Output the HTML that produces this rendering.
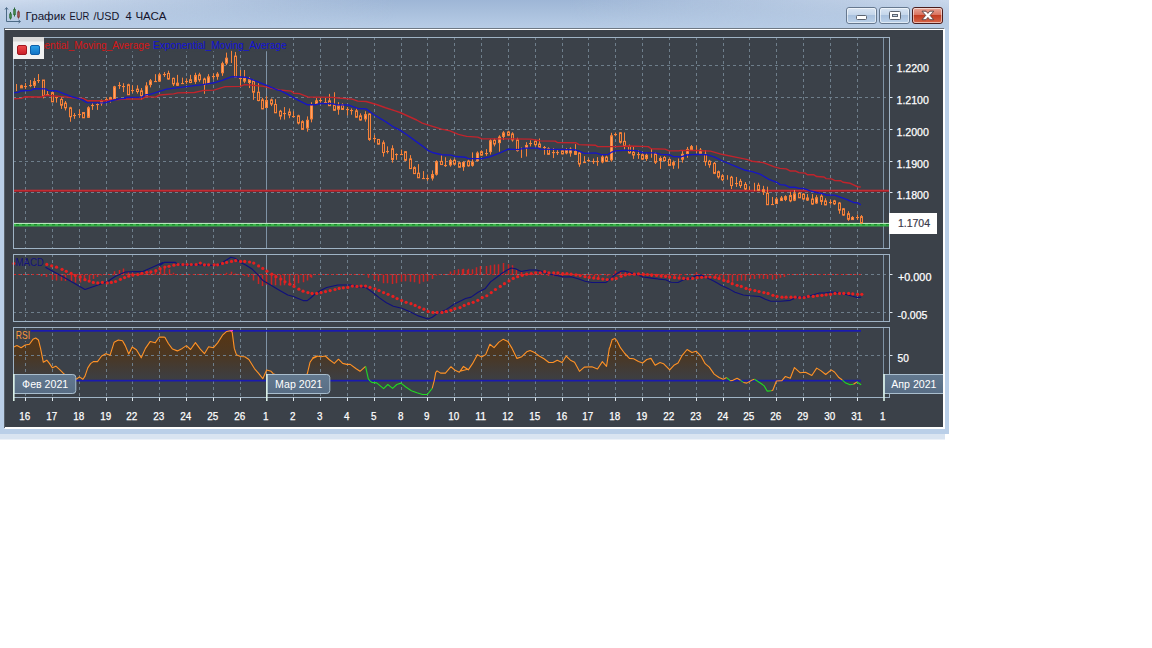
<!DOCTYPE html><html><head><meta charset="utf-8"><title>chart</title><style>
html,body{margin:0;padding:0;background:#fff;}body{width:1152px;height:648px;overflow:hidden;position:relative;font-family:"Liberation Sans",sans-serif;}
svg{position:absolute;left:0;top:0;display:block}text{font-family:"Liberation Sans",sans-serif;}
</style></head><body>
<svg width="1152" height="648" viewBox="0 0 1152 648">
<defs>
<linearGradient id="tb" x1="0" y1="0" x2="0" y2="1"><stop offset="0" stop-color="#9eb6d6"/><stop offset="1" stop-color="#b8cde6"/></linearGradient>
<linearGradient id="tbh" x1="0" y1="0" x2="1" y2="0"><stop offset="0" stop-color="#cfdcee" stop-opacity="1"/><stop offset="0.15" stop-color="#cfdcee" stop-opacity="0.6"/><stop offset="0.42" stop-color="#cfdcee" stop-opacity="0"/><stop offset="0.6" stop-color="#cfdcee" stop-opacity="0"/><stop offset="0.88" stop-color="#cfdcee" stop-opacity="0.6"/><stop offset="1" stop-color="#cfdcee" stop-opacity="0.9"/></linearGradient>
<linearGradient id="btn" x1="0" y1="0" x2="0" y2="1"><stop offset="0" stop-color="#dbe6f4"/><stop offset="0.48" stop-color="#c3d5ea"/><stop offset="0.5" stop-color="#a9c1de"/><stop offset="1" stop-color="#bdd2ea"/></linearGradient>
<linearGradient id="btnc" x1="0" y1="0" x2="0" y2="1"><stop offset="0" stop-color="#e9a99b"/><stop offset="0.48" stop-color="#d9705c"/><stop offset="0.5" stop-color="#c33d22"/><stop offset="1" stop-color="#d8674a"/></linearGradient>
<linearGradient id="rsifill" gradientUnits="userSpaceOnUse" x1="0" y1="331" x2="0" y2="381"><stop offset="0" stop-color="#5a3510" stop-opacity="0.97"/><stop offset="0.5" stop-color="#523414" stop-opacity="0.72"/><stop offset="1" stop-color="#483420" stop-opacity="0.12"/></linearGradient>
<linearGradient id="mlab" x1="0" y1="0" x2="0" y2="1"><stop offset="0" stop-color="#63798f"/><stop offset="1" stop-color="#586d85"/></linearGradient>
<linearGradient id="redsq" x1="0" y1="0" x2="0" y2="1"><stop offset="0" stop-color="#f04a4a"/><stop offset="1" stop-color="#c81e28"/></linearGradient>
<linearGradient id="bluesq" x1="0" y1="0" x2="0" y2="1"><stop offset="0" stop-color="#2aa0e8"/><stop offset="1" stop-color="#1272c4"/></linearGradient>
<clipPath id="cmain"><rect x="13" y="38" width="876" height="210"/></clipPath>
<clipPath id="cmacd"><rect x="14" y="255" width="875" height="66"/></clipPath>
<clipPath id="crsi"><rect x="14" y="328" width="875" height="69"/></clipPath>
<clipPath id="cdark"><rect x="5" y="30" width="938" height="397"/></clipPath>
<linearGradient id="tbm" x1="0" y1="0" x2="0" y2="1"><stop offset="0" stop-color="#fff"/><stop offset="1" stop-color="#000"/></linearGradient><mask id="tbmask"><rect x="0" y="0" width="949" height="29" fill="url(#tbm)"/></mask>
</defs>
<rect x="0" y="0" width="949" height="434" fill="#bacfe8"/>
<rect x="0" y="434" width="945" height="5.5" fill="#d9e4f1"/>
<rect x="0" y="0" width="949" height="29" fill="url(#tb)"/>
<rect x="0" y="0" width="949" height="29" fill="url(#tbh)" mask="url(#tbmask)"/>
<rect x="4" y="28" width="940" height="400" fill="#6e7883"/>
<rect x="4.5" y="29" width="940.5" height="400" fill="#fff"/>
<rect x="5" y="30" width="938" height="397" fill="#3b4149"/>
<rect x="4" y="28" width="1" height="400" fill="#59626c"/>
<g fill="none" stroke="#4c6a86" stroke-width="1"><path d="M6.5 8 V21.5 H20"/><path d="M5 9.5 L6.5 7.5 L8 9.5"/><path d="M18.5 20 L20.5 21.5 L18.5 23"/></g>
<g stroke="#2e6a3a" stroke-width="1"><path d="M10.5 12 V19.5 M14.5 7.5 V16.5"/><rect x="9.8" y="14" width="1.4" height="4" fill="#58a860"/><rect x="13.8" y="9.5" width="1.4" height="5" fill="#58a860"/></g>
<g stroke="#7a3a3a" stroke-width="1"><path d="M18.5 10.5 V18.5"/><rect x="17.8" y="12" width="1.4" height="5" fill="#c86a6a"/></g>
<g font-size="11.6" fill="#14142c" id="title"><text x="25.5" y="19.6" textLength="39.8" lengthAdjust="spacingAndGlyphs">График</text><text x="69.6" y="19.6" textLength="19.8" lengthAdjust="spacingAndGlyphs">EUR</text><text x="93.4" y="19.6" textLength="25.8" lengthAdjust="spacingAndGlyphs">/USD</text><text x="125.4" y="19.6" textLength="6.2" lengthAdjust="spacingAndGlyphs">4</text><text x="135.4" y="19.6" textLength="31" lengthAdjust="spacingAndGlyphs">ЧАСА</text></g>
<rect x="846.5" y="7.5" width="30" height="16" rx="2.5" fill="url(#btn)" stroke="#66788f" stroke-width="1"/>
<rect x="847.5" y="8.5" width="28" height="14" rx="1.5" fill="none" stroke="#fff" stroke-opacity="0.55" stroke-width="1"/>
<rect x="879.5" y="7.5" width="30" height="16" rx="2.5" fill="url(#btn)" stroke="#66788f" stroke-width="1"/>
<rect x="880.5" y="8.5" width="28" height="14" rx="1.5" fill="none" stroke="#fff" stroke-opacity="0.55" stroke-width="1"/>
<rect x="912.5" y="7.5" width="30" height="16" rx="2.5" fill="url(#btnc)" stroke="#4a1c1c" stroke-width="1"/>
<rect x="913.5" y="8.5" width="28" height="14" rx="1.5" fill="none" stroke="#fff" stroke-opacity="0.55" stroke-width="1"/>
<rect x="856.5" y="15.5" width="10" height="4" rx="1" fill="#fff" stroke="#5c6470" stroke-width="1"/>
<rect x="889.5" y="11.5" width="11" height="8" rx="1" fill="#fff" stroke="#5c6470" stroke-width="1"/><rect x="892.5" y="14.5" width="5" height="2" fill="#c0d0e4" stroke="#5c6470" stroke-width="1"/>
<path d="M922 11.2 L926 11.2 L927.9 13.4 L929.8 11.2 L933.8 11.2 L930.1 15.4 L933.8 19.7 L929.8 19.7 L927.9 17.4 L926 19.7 L922 19.7 L925.7 15.4 Z" fill="#fff" stroke="#5a4040" stroke-width="0.9" stroke-linejoin="round"/>
<g stroke="#6e7e8b" stroke-width="1" stroke-dasharray="3 3" fill="none">
<path d="M25.5 37 V248.5"/>
<path d="M52.5 37 V248.5"/>
<path d="M79.5 37 V248.5"/>
<path d="M106.5 37 V248.5"/>
<path d="M132.5 37 V248.5"/>
<path d="M159.5 37 V248.5"/>
<path d="M186.5 37 V248.5"/>
<path d="M213.5 37 V248.5"/>
<path d="M240.5 37 V248.5"/>
<path d="M293.5 37 V248.5"/>
<path d="M320.5 37 V248.5"/>
<path d="M347.5 37 V248.5"/>
<path d="M374.5 37 V248.5"/>
<path d="M401.5 37 V248.5"/>
<path d="M427.5 37 V248.5"/>
<path d="M454.5 37 V248.5"/>
<path d="M481.5 37 V248.5"/>
<path d="M508.5 37 V248.5"/>
<path d="M535.5 37 V248.5"/>
<path d="M562.5 37 V248.5"/>
<path d="M588.5 37 V248.5"/>
<path d="M615.5 37 V248.5"/>
<path d="M642.5 37 V248.5"/>
<path d="M669.5 37 V248.5"/>
<path d="M696.5 37 V248.5"/>
<path d="M723.5 37 V248.5"/>
<path d="M749.5 37 V248.5"/>
<path d="M776.5 37 V248.5"/>
<path d="M803.5 37 V248.5"/>
<path d="M830.5 37 V248.5"/>
<path d="M857.5 37 V248.5"/>
<path d="M13 65.5 H889"/>
<path d="M13 97.5 H889"/>
<path d="M13 129.5 H889"/>
<path d="M13 161.5 H889"/>
<path d="M13 192.5 H889"/>
</g>
<path d="M266.5 37.5 V248.5" stroke="#7f93a6" stroke-width="1"/>
<path d="M883.5 37.5 V248.5" stroke="#7f93a6" stroke-width="1"/>
<g stroke="#6e7e8b" stroke-width="1" stroke-dasharray="3 3" fill="none">
<path d="M25.5 254 V321.5"/>
<path d="M52.5 254 V321.5"/>
<path d="M79.5 254 V321.5"/>
<path d="M106.5 254 V321.5"/>
<path d="M132.5 254 V321.5"/>
<path d="M159.5 254 V321.5"/>
<path d="M186.5 254 V321.5"/>
<path d="M213.5 254 V321.5"/>
<path d="M240.5 254 V321.5"/>
<path d="M293.5 254 V321.5"/>
<path d="M320.5 254 V321.5"/>
<path d="M347.5 254 V321.5"/>
<path d="M374.5 254 V321.5"/>
<path d="M401.5 254 V321.5"/>
<path d="M427.5 254 V321.5"/>
<path d="M454.5 254 V321.5"/>
<path d="M481.5 254 V321.5"/>
<path d="M508.5 254 V321.5"/>
<path d="M535.5 254 V321.5"/>
<path d="M562.5 254 V321.5"/>
<path d="M588.5 254 V321.5"/>
<path d="M615.5 254 V321.5"/>
<path d="M642.5 254 V321.5"/>
<path d="M669.5 254 V321.5"/>
<path d="M696.5 254 V321.5"/>
<path d="M723.5 254 V321.5"/>
<path d="M749.5 254 V321.5"/>
<path d="M776.5 254 V321.5"/>
<path d="M803.5 254 V321.5"/>
<path d="M830.5 254 V321.5"/>
<path d="M857.5 254 V321.5"/>
<path d="M13 274.5 H889"/>
<path d="M13 312.5 H889"/>
</g>
<path d="M266.5 254.5 V321.5" stroke="#7f93a6" stroke-width="1"/>
<path d="M883.5 254.5 V321.5" stroke="#7f93a6" stroke-width="1"/>
<g clip-path="url(#crsi)">
<path d="M13.47 347 L16.94 345.61 L21.11 347.69 L25.28 344.92 L29.44 344.22 L32.92 339.36 L35.69 337.97 L38.47 340.06 L40.56 348.39 L43.33 362.28 L46.81 360.19 L49.58 363.67 L52.36 367.83 L55.83 366.17 L60 369.92 L64.17 374.08 L68.33 376.86 L72.5 378.25 L76.67 378.94 L79.44 376.86 L82.92 379.22 L85 376.17 L87.78 367.83 L90.56 363.67 L93.33 361.58 L97.5 361.58 L101.67 356.03 L105.83 353.67 L110 355.33 L114.17 342.14 L118.33 340.06 L122.5 340.75 L125.28 345.61 L128.75 353.94 L132.22 347 L136.39 349.78 L141.25 357.83 L145.42 348.39 L150.28 341.44 L155.14 342.83 L159.31 337 L164.17 337 L160 337.28 L164.86 337.28 L168.33 343.53 L172.5 349.08 L177.36 350.89 L182.22 348.39 L186.39 345.61 L190.56 349.5 L195.42 342.56 L200.28 349.08 L204.44 353.67 L208.61 346.72 L213.47 347.69 L217.64 342.83 L222.5 335.19 L226.67 331.44 L230.83 330.61 L232.22 332.42 L234.31 348.39 L236.39 354.64 L240.56 356.44 L244.72 356.72 L248.89 359.5 L254.44 368.53 L258.61 373.39 L262.78 378.67 L266.67 369.92 L271.11 371.31 L273.19 373.67 L278.06 375.47 L285 376.86 L293.33 377.56 L301.67 376.86 L307.22 374.08 L310 362.28 L312.78 358.39 L316.94 356.44 L312.78 357.83 L316.94 356.03 L321.11 356.72 L325.28 356.03 L329.44 359.78 L334.31 363.39 L338.47 359.22 L342.64 363.39 L346.81 364.36 L350.28 364.36 L355.83 368.53 L360 371.31 L365.56 366.44 L365.56 380.7 L13.47 380.7 Z" fill="url(#rsifill)" stroke="none"/>
<path d="M432.22 380.7 L434.31 380.33 L435.69 372.69 L437.08 370.89 L440.56 373.11 L445.42 373.11 L450.97 366.72 L455.14 370.33 L459.31 372.28 L463.47 366.44 L467.64 369.22 L460 371.31 L463.47 366.44 L468.33 369.92 L472.5 363.67 L477.36 354.64 L481.53 357 L485.69 354.64 L489.86 344.22 L494.03 347.69 L498.89 342.14 L503.06 339.36 L507.92 341.44 L512.08 348.39 L516.94 358.39 L521.81 356.72 L526.67 351.86 L530.14 350.47 L535 352.83 L539.17 356.03 L544.03 358.81 L548.89 362.56 L553.06 362.56 L557.22 360.19 L562.08 362.56 L566.25 356.03 L570.42 360.19 L574.58 362.28 L579.44 371.31 L584.31 367.14 L591.94 366.72 L597.5 368.94 L602.36 361.58 L606.53 366.44 L609.31 348.39 L610 347 L612.08 339.78 L614.86 338.39 L616.94 340.75 L620.42 347.69 L624.58 353.25 L629.44 358.39 L633.61 358.81 L638.47 361.58 L642.64 362.97 L646.81 359.5 L650.97 358.39 L655.14 365.33 L660 362.56 L663.47 363.67 L669.72 369.92 L673.89 365.33 L678.06 362.97 L682.22 355.33 L687.08 349.5 L691.94 352.56 L696.11 351.17 L700.97 356.03 L705.14 363.67 L709.31 367.14 L714.17 374.08 L719.03 377.56 L723.19 379.22 L726.67 377.56 L726.67 380.7 L432.22 380.7 Z" fill="url(#rsifill)" stroke="none"/>
<path d="M730.14 380.61 L732.92 380.33 L737.08 378.25 L740.56 380.33 L740.56 380.7 L730.14 380.7 Z" fill="url(#rsifill)" stroke="none"/>
<path d="M743.33 380.7 L746.81 380.7 L751.67 380.33 L754.44 379.22 L754.44 380.7 L743.33 380.7 Z" fill="url(#rsifill)" stroke="none"/>
<path d="M771.53 380.7 L772.92 380.7 L776.39 380.7 L781.94 380.61 L785.42 376.44 L790.28 378.25 L794.44 367.56 L800 372.69 L805.56 372.28 L811.81 375.47 L816.67 368.11 L820.83 370.61 L825.69 374.5 L831.25 369.92 L834.72 372.28 L838.89 377.56 L842.36 380.06 L842.36 380.7 L771.53 380.7 Z" fill="url(#rsifill)" stroke="none"/>
<path d="M853.47 380.7 L856.94 380.7 L856.94 380.7 L853.47 380.7 Z" fill="url(#rsifill)" stroke="none"/>
</g>
<g stroke="#6e7e8b" stroke-width="1" stroke-dasharray="3 3" fill="none">
<path d="M25.5 327 V397.5"/>
<path d="M52.5 327 V397.5"/>
<path d="M79.5 327 V397.5"/>
<path d="M106.5 327 V397.5"/>
<path d="M132.5 327 V397.5"/>
<path d="M159.5 327 V397.5"/>
<path d="M186.5 327 V397.5"/>
<path d="M213.5 327 V397.5"/>
<path d="M240.5 327 V397.5"/>
<path d="M293.5 327 V397.5"/>
<path d="M320.5 327 V397.5"/>
<path d="M347.5 327 V397.5"/>
<path d="M374.5 327 V397.5"/>
<path d="M401.5 327 V397.5"/>
<path d="M427.5 327 V397.5"/>
<path d="M454.5 327 V397.5"/>
<path d="M481.5 327 V397.5"/>
<path d="M508.5 327 V397.5"/>
<path d="M535.5 327 V397.5"/>
<path d="M562.5 327 V397.5"/>
<path d="M588.5 327 V397.5"/>
<path d="M615.5 327 V397.5"/>
<path d="M642.5 327 V397.5"/>
<path d="M669.5 327 V397.5"/>
<path d="M696.5 327 V397.5"/>
<path d="M723.5 327 V397.5"/>
<path d="M749.5 327 V397.5"/>
<path d="M776.5 327 V397.5"/>
<path d="M803.5 327 V397.5"/>
<path d="M830.5 327 V397.5"/>
<path d="M857.5 327 V397.5"/>
<path d="M13 355.5 H889"/>
</g>
<path d="M266.5 327.5 V397.5" stroke="#7f93a6" stroke-width="1"/>
<path d="M883.5 327.5 V397.5" stroke="#7f93a6" stroke-width="1"/>
<rect x="14" y="38" width="275" height="13.2" fill="#3b4149"/>
<g clip-path="url(#cmain)">
<rect x="14" y="189.7" width="876" height="1.4" fill="#c02c34"/><rect x="14" y="191" width="876" height="1" fill="#98222a"/>
<rect x="14" y="222.9" width="876" height="1.1" fill="#c6ecc8"/>
<rect x="14" y="223.9" width="876" height="2.6" fill="#3db54c"/>
<path d="M16 224.7 H890" stroke="#0f7a22" stroke-width="1.1" stroke-dasharray="3 3"/>
<path d="M12.5 84.22 V87.37 M16.5 84.01 V91.04 M21.5 84.75 V87.9 M25.5 82.97 V88.95 M30.5 80.03 V87.16 M34.5 77.93 V88.95 M38.5 74.05 V82.97 M43.5 80.03 V98.39 M47.5 91.04 V95.24 M52.5 92.09 V101.85 M56.5 97.02 V102.58 M61.5 97.34 V108.88 M65.5 101.01 V110.45 M70.5 106.78 V121.78 M74.5 113.07 V118.84 M79.5 109.4 V117.79 M83.5 112.02 V118 M88.5 106.25 V117.79 M92.5 103.11 V109.92 M97.5 103.11 V109.92 M101.5 99.44 V105.73 M106.5 97.34 V102.06 M110.5 96.81 V102.58 M114.5 85.8 V98.91 M119.5 82.13 V88.95 M123.5 83.18 V92.09 M128.5 83.7 V94.71 M132.5 85.28 V92.92 M137.5 85.28 V93.61 M141.5 88.06 V99.86 M146.5 82.22 V96.39 M150.5 79.03 V87.36 M155.5 74.17 V81.81 M159.5 72.78 V81.81 M164.5 72.08 V76.94 M168.5 70.69 V79.72 M173.5 77.64 V85.97 M177.5 74.86 V85.97 M182.5 77.64 V83.89 M186.5 78.33 V83.89 M190.5 74.86 V83.19 M195.5 72.78 V83.89 M199.5 72.78 V81.81 M204.5 77.64 V93.89 M208.5 74.17 V83.89 M213.5 73.47 V79.44 M217.5 72.08 V79.72 M222.5 61.67 V75.83 M226.5 52.64 V65.14 M231.5 50.83 V63.06 M235.5 51.94 V77.22 M240.5 70 V85.97 M244.5 70 V83.19 M249.5 76.94 V88.06 M253.5 79.72 V99.86 M258.5 83.19 V101.25 M262.5 97.78 V109.17 M266.5 96.11 V108.19 M271.5 98.47 V106.11 M275.5 99.17 V113.06 M280.5 109.86 V119.58 M284.5 107.08 V119.58 M289.5 108.47 V118.19 M293.5 111.25 V117.5 M298.5 114.72 V124.44 M302.5 120.28 V130 M307.5 116.39 V131.67 M311.5 102.22 V122.36 M316.5 98.06 V104.31 M320.5 98.06 V102.92 M325.5 97.36 V102.92 M329.5 93.89 V105.69 M334.5 92.22 V110.83 M338.5 102.22 V114.72 M342.5 103.33 V109.86 M347.5 107.08 V115.42 M351.5 108.47 V114.72 M356.5 108.47 V117.5 M360.5 113.33 V120.56 M365.5 111.25 V121.67 M369.5 113.33 V140.83 M374.5 134.86 V142.5 M378.5 139.03 V144.58 M383.5 140.42 V156.67 M387.5 146.39 V153.61 M392.5 145.28 V162.64 M396.5 153.33 V159.86 M401.5 149.58 V154.72 M405.5 151.39 V161.39 M410.5 155.14 V169.03 M414.5 166.25 V173.89 M418.5 164.17 V178.06 M423.5 171.11 V178.75 M427.5 174.58 V180.83 M432.5 170.42 V180.56 M436.5 160.28 V175.56 M441.5 155.14 V164.86 M445.5 157.22 V166.94 M450.5 158.61 V166.67 M454.5 158.61 V165.28 M459.5 161.67 V167.64 M463.5 161.11 V170.83 M468.5 159.72 V166.67 M472.5 152.36 V166.67 M477.5 151.39 V161.67 M481.5 150.28 V155.83 M486.5 149.17 V155.83 M490.5 139.17 V154.44 M494.5 138.47 V146.39 M499.5 135.28 V151.67 M503.5 131.11 V139.86 M508.5 130.83 V136.11 M512.5 132.22 V141.67 M517.5 137.78 V151.67 M521.5 147.5 V157.92 M526.5 142.22 V156.53 M530.5 140.28 V146.39 M535.5 140.28 V146.39 M539.5 138.47 V147.5 M544.5 145.97 V154.72 M548.5 147.36 V155 M553.5 148.06 V158.06 M557.5 150.14 V155 M562.5 149.17 V154.31 M566.5 148.06 V154.31 M570.5 147.36 V156.67 M575.5 144.17 V155 M579.5 151.53 V166.81 M584.5 156.11 V162.64 M588.5 158.47 V161.94 M593.5 158.47 V164.03 M597.5 157.08 V165.83 M602.5 155 V163.33 M606.5 155.69 V161.94 M611.5 132.78 V161.67 M615.5 132.5 V136.25 M620.5 132.08 V143.61 M624.5 132.5 V149.44 M629.5 144.58 V153.61 M633.5 146.67 V158.89 M638.5 150.14 V158.89 M642.5 152.92 V159.86 M646.5 153.61 V160.83 M651.5 148.75 V157.78 M655.5 152.22 V164.03 M660.5 156.39 V168.89 M664.5 156.11 V161.67 M669.5 158.47 V166.11 M673.5 160.56 V168.89 M678.5 158.47 V168.61 M682.5 150.83 V162.64 M687.5 146.94 V157.78 M691.5 145 V150.14 M696.5 145.56 V152.92 M700.5 148.06 V153.61 M705.5 150.14 V165.83 M709.5 159.86 V167.78 M714.5 161.94 V174.17 M718.5 170.56 V178.61 M722.5 174.17 V181.11 M727.5 175.14 V179.72 M731.5 175.83 V189.03 M736.5 176.94 V186.94 M740.5 178.89 V188.06 M745.5 182.08 V190 M749.5 186.25 V190 M754.5 182.78 V191.11 M758.5 182.78 V191.11 M763.5 185.83 V195 M767.5 186.67 V205 M772.5 196.94 V204.72 M776.5 196.94 V203.89 M781.5 195.97 V200.83 M785.5 195.28 V201.11 M790.5 191.81 V202.22 M794.5 190 V201.11 M799.5 192.22 V198.06 M803.5 193.57 V199.86 M807.5 194.09 V200.91 M812.5 194.09 V204.9 M816.5 195.14 V203.85 M821.5 194.09 V204.9 M825.5 198.29 V205.11 M830.5 199.86 V204.58 M834.5 199.86 V204.9 M839.5 201.96 V213.71 M843.5 208.04 V215.81 M848.5 211.19 V220.84 M852.5 216.12 V219.79 M857.5 214.55 V219.79 M861.5 215.07 V223.46" stroke="#f6823a" stroke-width="1" fill="none"/>
<g fill="#56423a" stroke="#f6823a" stroke-width="1"><rect x="42.5" y="80.03" width="2" height="15.73"/><rect x="51.5" y="92.62" width="2" height="9.23"/><rect x="60.5" y="99.44" width="2" height="5.77"/><rect x="64.5" y="103.11" width="2" height="4.72"/><rect x="69.5" y="107.83" width="2" height="8.92"/><rect x="82.5" y="112.55" width="2" height="5.24"/><rect x="127.5" y="84.75" width="2" height="9.97"/><rect x="136.5" y="89.17" width="2" height="2.36"/><rect x="140.5" y="90.83" width="2" height="4.86"/><rect x="167.5" y="73.47" width="2" height="5.56"/><rect x="172.5" y="78.33" width="2" height="5.56"/><rect x="189.5" y="79.72" width="2" height="2.78"/><rect x="198.5" y="74.86" width="2" height="4.86"/><rect x="203.5" y="79.03" width="2" height="5.56"/><rect x="234.5" y="56.11" width="2" height="20.83"/><rect x="252.5" y="80.83" width="2" height="11.39"/><rect x="257.5" y="92.22" width="2" height="8.33"/><rect x="261.5" y="99.86" width="2" height="9.03"/><rect x="270.5" y="99.86" width="2" height="4.17"/><rect x="274.5" y="104.44" width="2" height="8.33"/><rect x="279.5" y="111.25" width="2" height="4.86"/><rect x="288.5" y="111.94" width="2" height="3.06"/><rect x="297.5" y="115.83" width="2" height="7.22"/><rect x="301.5" y="121.67" width="2" height="7.64"/><rect x="328.5" y="100.83" width="2" height="4.86"/><rect x="333.5" y="105" width="2" height="5.28"/><rect x="341.5" y="105" width="2" height="4.44"/><rect x="355.5" y="110.83" width="2" height="6.39"/><rect x="359.5" y="115.83" width="2" height="4.17"/><rect x="368.5" y="114.03" width="2" height="25.42"/><rect x="377.5" y="139.44" width="2" height="4.72"/><rect x="382.5" y="142.78" width="2" height="9.72"/><rect x="391.5" y="148.75" width="2" height="10.69"/><rect x="404.5" y="151.67" width="2" height="8.61"/><rect x="409.5" y="158.89" width="2" height="9.72"/><rect x="413.5" y="167.64" width="2" height="5.97"/><rect x="417.5" y="173.19" width="2" height="4.58"/><rect x="440.5" y="161.39" width="2" height="3.19"/><rect x="453.5" y="160.28" width="2" height="3.89"/><rect x="458.5" y="162.78" width="2" height="4.44"/><rect x="467.5" y="161.11" width="2" height="4.72"/><rect x="480.5" y="151.67" width="2" height="3.47"/><rect x="493.5" y="140.28" width="2" height="3.75"/><rect x="507.5" y="131.94" width="2" height="3.33"/><rect x="511.5" y="133.89" width="2" height="5.97"/><rect x="516.5" y="139.86" width="2" height="10.69"/><rect x="534.5" y="141.25" width="2" height="3.47"/><rect x="538.5" y="144.03" width="2" height="3.19"/><rect x="547.5" y="148.75" width="2" height="5.56"/><rect x="561.5" y="150.83" width="2" height="3.06"/><rect x="578.5" y="152.92" width="2" height="11.11"/><rect x="605.5" y="157.08" width="2" height="4.17"/><rect x="619.5" y="132.78" width="2" height="9.44"/><rect x="623.5" y="141.39" width="2" height="4.17"/><rect x="628.5" y="146.39" width="2" height="6.53"/><rect x="632.5" y="152.22" width="2" height="2.78"/><rect x="641.5" y="154.72" width="2" height="4.44"/><rect x="654.5" y="153.61" width="2" height="8.61"/><rect x="663.5" y="157.5" width="2" height="3.06"/><rect x="668.5" y="159.44" width="2" height="5.97"/><rect x="704.5" y="154.31" width="2" height="7.36"/><rect x="708.5" y="161.25" width="2" height="3.47"/><rect x="713.5" y="163.33" width="2" height="10"/><rect x="717.5" y="171.67" width="2" height="5.28"/><rect x="721.5" y="175.83" width="2" height="3.89"/><rect x="730.5" y="177.22" width="2" height="8.33"/><rect x="739.5" y="181.39" width="2" height="4.17"/><rect x="744.5" y="184.44" width="2" height="4.58"/><rect x="757.5" y="185.28" width="2" height="5.14"/><rect x="766.5" y="193.19" width="2" height="11.53"/><rect x="789.5" y="195.56" width="2" height="5.28"/><rect x="798.5" y="193.19" width="2" height="4.58"/><rect x="802.5" y="194.09" width="2" height="4.93"/><rect x="811.5" y="199.02" width="2" height="5.04"/><rect x="820.5" y="196.19" width="2" height="5.24"/><rect x="824.5" y="200.91" width="2" height="3.99"/><rect x="833.5" y="200.91" width="2" height="2.94"/><rect x="838.5" y="203.01" width="2" height="7.13"/><rect x="842.5" y="208.78" width="2" height="6.29"/><rect x="847.5" y="213.71" width="2" height="5.56"/><rect x="860.5" y="216.65" width="2" height="6.29"/></g>
<g fill="#ffa366" stroke="#f6823a" stroke-width="1"><rect x="11.5" y="84.22" width="2" height="3.15"/><rect x="20.5" y="85.8" width="2" height="2.1"/><rect x="33.5" y="81.6" width="2" height="3.67"/><rect x="87.5" y="107.83" width="2" height="9.44"/><rect x="100.5" y="101.01" width="2" height="2.1"/><rect x="109.5" y="97.86" width="2" height="2.62"/><rect x="113.5" y="86.85" width="2" height="12.06"/><rect x="145.5" y="85.97" width="2" height="9.72"/><rect x="149.5" y="80.83" width="2" height="3.75"/><rect x="158.5" y="74.86" width="2" height="6.25"/><rect x="176.5" y="83.19" width="2" height="2.08"/><rect x="194.5" y="75.56" width="2" height="5.83"/><rect x="207.5" y="76.94" width="2" height="6.67"/><rect x="216.5" y="74.17" width="2" height="2.08"/><rect x="221.5" y="63.75" width="2" height="9.03"/><rect x="225.5" y="58.19" width="2" height="4.86"/><rect x="243.5" y="78.33" width="2" height="2.78"/><rect x="248.5" y="79.72" width="2" height="2.78"/><rect x="265.5" y="100.56" width="2" height="6.94"/><rect x="306.5" y="120.28" width="2" height="7.64"/><rect x="310.5" y="105.28" width="2" height="13.61"/><rect x="315.5" y="100.83" width="2" height="2.78"/><rect x="337.5" y="105.69" width="2" height="3.47"/><rect x="364.5" y="114.72" width="2" height="4.17"/><rect x="431.5" y="174.58" width="2" height="3.47"/><rect x="435.5" y="161.67" width="2" height="12.5"/><rect x="449.5" y="160.69" width="2" height="4.17"/><rect x="462.5" y="162.5" width="2" height="4.17"/><rect x="471.5" y="162.08" width="2" height="3.19"/><rect x="476.5" y="153.06" width="2" height="7.64"/><rect x="489.5" y="140.83" width="2" height="10.83"/><rect x="498.5" y="137.08" width="2" height="5.56"/><rect x="502.5" y="132.92" width="2" height="3.47"/><rect x="525.5" y="145.42" width="2" height="2.36"/><rect x="565.5" y="150.14" width="2" height="2.78"/><rect x="569.5" y="149.17" width="2" height="3.75"/><rect x="574.5" y="151.53" width="2" height="2.78"/><rect x="601.5" y="157.08" width="2" height="4.86"/><rect x="610.5" y="135.83" width="2" height="24.03"/><rect x="645.5" y="155.28" width="2" height="3.19"/><rect x="659.5" y="158.47" width="2" height="2.08"/><rect x="672.5" y="162.64" width="2" height="2.36"/><rect x="681.5" y="154.31" width="2" height="4.86"/><rect x="686.5" y="149.44" width="2" height="4.17"/><rect x="690.5" y="146.67" width="2" height="2.78"/><rect x="699.5" y="150.14" width="2" height="3.19"/><rect x="762.5" y="189.72" width="2" height="2.08"/><rect x="775.5" y="199.17" width="2" height="4.44"/><rect x="780.5" y="198.06" width="2" height="2.5"/><rect x="784.5" y="196.67" width="2" height="2.78"/><rect x="793.5" y="193.89" width="2" height="6.25"/><rect x="806.5" y="197.97" width="2" height="2.1"/><rect x="815.5" y="197.76" width="2" height="5.24"/><rect x="851.5" y="217.48" width="2" height="2.1"/></g>
<g fill="#f6823a"><rect x="24" y="86" width="3" height="1.1"/><rect x="29" y="85" width="3" height="1.1"/><rect x="37" y="80" width="3" height="1.1"/><rect x="46" y="94" width="3" height="1.1"/><rect x="55" y="97" width="3" height="1.1"/><rect x="73" y="115" width="3" height="1.1"/><rect x="78" y="114" width="3" height="1.1"/><rect x="91" y="105" width="3" height="1.1"/><rect x="96" y="104" width="3" height="1.1"/><rect x="105" y="99" width="3" height="1.1"/><rect x="118" y="85" width="3" height="1.1"/><rect x="122" y="86" width="3" height="1.1"/><rect x="131" y="90" width="3" height="1.1"/><rect x="154" y="81" width="3" height="1.1"/><rect x="163" y="74" width="3" height="1.1"/><rect x="181" y="83" width="3" height="1.1"/><rect x="185" y="81" width="3" height="1.1"/><rect x="212" y="76" width="3" height="1.1"/><rect x="239" y="78" width="3" height="1.1"/><rect x="283" y="113" width="3" height="1.1"/><rect x="292" y="116" width="3" height="1.1"/><rect x="319" y="100" width="3" height="1.1"/><rect x="324" y="102" width="3" height="1.1"/><rect x="346" y="109" width="3" height="1.1"/><rect x="350" y="110" width="3" height="1.1"/><rect x="373" y="138" width="3" height="1.1"/><rect x="386" y="151" width="3" height="1.1"/><rect x="395" y="154" width="3" height="1.1"/><rect x="400" y="154" width="3" height="1.1"/><rect x="422" y="178" width="3" height="1.1"/><rect x="426" y="178" width="3" height="1.1"/><rect x="444" y="165" width="3" height="1.1"/><rect x="485" y="153" width="3" height="1.1"/><rect x="529" y="143" width="3" height="1.1"/><rect x="543" y="147" width="3" height="1.1"/><rect x="552" y="152" width="3" height="1.1"/><rect x="556" y="152" width="3" height="1.1"/><rect x="583" y="162" width="3" height="1.1"/><rect x="587" y="160" width="3" height="1.1"/><rect x="592" y="161" width="3" height="1.1"/><rect x="596" y="161" width="3" height="1.1"/><rect x="614" y="134" width="3" height="1.1"/><rect x="637" y="154" width="3" height="1.1"/><rect x="735" y="183" width="3" height="1.1"/><rect x="771" y="204" width="3" height="1.1"/><rect x="829" y="202" width="3" height="1.1"/><rect x="856" y="217" width="3" height="1.1"/></g>
<path d="M13.15 98.91 L21.54 98.39 L24.69 96.81 L41.47 97.02 L45.67 95.24 L62.45 96.6 L72.94 97.86 L83.43 98.39 L87.63 100.8 L104.41 100.8 L114.9 99.75 L125.39 99.12 L125 98.89 L141.67 99.17 L145.83 96.67 L155.56 97.08 L159.72 95 L173.61 93.89 L177.78 92.92 L194.44 92.5 L202.78 90.56 L213.89 90.14 L225 86.67 L240.28 86.39 L244.44 84.58 L250 85 L263.89 86.39 L270.83 88.06 L280 90 L291.11 91.11 L293.89 93.19 L299.44 93.61 L307.78 96.94 L332.78 97.36 L338.33 98.06 L352.22 99.17 L357.78 101.11 L366.11 101.53 L377.22 104.72 L385.56 107.78 L395.28 110.83 L400 112.5 L408.33 116.25 L416.67 120 L422.22 123.19 L433.33 126.67 L441.67 129.17 L450 130.83 L458.33 134.31 L466.67 136.39 L477.78 137.08 L481.94 138.89 L511.11 138.89 L530.56 139.17 L538.89 140.56 L540 140.83 L555.28 141.11 L557.36 142.5 L576.11 142.78 L578.89 144.58 L595.56 145.28 L597.64 146.67 L615 146.67 L628.89 145.97 L648.33 146.67 L651.11 148.75 L665 149.17 L669.17 150.83 L678.89 150.83 L680 150.56 L696.67 150.56 L710.56 151.11 L721.67 154.31 L735.56 157.08 L746.67 159.44 L752.22 161.25 L763.33 162.64 L774.44 166.81 L780 168.39 L786.29 168.92 L790.49 171.01 L795.73 171.01 L798.88 172.59 L805.18 173.11 L807.27 174.69 L813.57 174.69 L816.71 176.57 L824.06 176.99 L826.16 178.67 L831.4 178.88 L834.55 180.46 L840.84 180.77 L842.94 182.24 L850.28 183.29 L857.63 186.75 L860.77 187.06" stroke="#c0242c" stroke-width="1.4" fill="none" stroke-linejoin="round"/>
<path d="M13.15 92.83 L17.87 92.41 L20.49 91.04 L30.98 90.31 L34.13 88.63 L45.67 88.95 L47.76 90.31 L57.2 91.04 L62.45 93.14 L72.94 97.02 L81.33 99.44 L87.1 102.58 L104.41 102.9 L110.7 101.01 L119.09 98.91 L125.39 98.39 L125 97.5 L141.67 97.08 L145.83 94.72 L150 94.31 L166.67 89.17 L186.11 86.67 L202.78 84.58 L213.89 82.78 L222.22 80.42 L231.94 76.67 L245.83 77.22 L254.17 80.42 L266.67 85.28 L277.78 90.14 L280 90.42 L288.33 94.58 L298.06 100.14 L307.08 104.72 L316.11 104.72 L320.28 103.33 L332.78 103.61 L335.56 104.72 L348.06 105 L357.78 108.47 L366.11 108.89 L374.44 115 L385.56 121.67 L393.89 127.22 L400 130.14 L406.94 134.72 L413.89 139.86 L422.22 145.83 L427.78 150.28 L433.33 152.78 L441.67 154.72 L451.39 155.14 L455.56 156.53 L465.28 157.22 L468.06 158.61 L481.94 158.61 L490.28 156.53 L500 152.78 L508.33 149.17 L518.06 149.58 L525 148.19 L538.89 148.19 L540 149.17 L553.89 149.44 L574.72 149.72 L580.28 151.53 L584.44 153.33 L595.56 152.92 L601.11 154.72 L608.06 154.31 L611.53 152.22 L615.69 150.83 L626.11 150.14 L637.22 150.56 L642.78 152.92 L655.28 152.92 L660.83 154.31 L669.17 154.72 L673.33 156.67 L678.89 156.67 L680 157.08 L686.94 155 L696.67 154.31 L706.39 154.72 L714.72 157.08 L723.06 161.25 L735.56 166.39 L745.28 170.28 L752.22 171.67 L760.56 174.44 L768.89 179.31 L777.22 182.5 L780 184.65 L785.24 185.18 L789.44 187.27 L794.69 187.06 L798.88 188.32 L804.13 188.53 L810.42 190.95 L816.71 192.52 L824.06 194.09 L826.16 195.14 L834.55 195.14 L838.74 196.71 L847.14 199.65 L853.43 202.48 L857.63 202.8 L860.77 204.9" stroke="#1616c4" stroke-width="1.35" fill="none" stroke-linejoin="round"/>
</g>
<text x="16" y="48.9" font-size="11.2" fill="#d81616" id="lr" textLength="133.5" lengthAdjust="spacingAndGlyphs">Exponential_Moving_Average</text>
<text x="153" y="48.9" font-size="11.2" fill="#1212d8" id="lb" textLength="133.5" lengthAdjust="spacingAndGlyphs">Exponential_Moving_Average</text>
<g clip-path="url(#cmacd)">
<path d="M14 274.5 H862" stroke="#d82424" stroke-width="1" stroke-dasharray="2 2.47"/>
<path d="M41.5 274.5 V276.22 M46.5 274.5 V276.92 M52.5 274.5 V279.69 M56.5 274.5 V280.39 M61.5 274.5 V280.67 M65.5 274.5 V281.08 M71.5 274.5 V281.78 M75.5 274.5 V282.47 M80.5 274.5 V282.47 M84.5 274.5 V281.08 M89.5 274.5 V279.69 M93.5 274.5 V279 M97.5 274.5 V276.92 M101.5 274.5 V275.53 M114.5 274.5 V271.36 M119.5 274.5 V269.97 M123.5 274.5 V268.58 M128.5 274.5 V272.06 M132.5 274.5 V272.75 M141.5 274.5 V272.75 M146.5 274.5 V272.06 M150.5 274.5 V271.36 M155.5 274.5 V270.39 M160.5 274.5 V267.89 M164.5 274.5 V267.19 M169.5 274.5 V269.28 M160.5 274.5 V271.44 M164.5 274.5 V270.75 M169.5 274.5 V271.17 M173.5 274.5 V272.83 M226.5 274.5 V272.83 M231.5 274.5 V271.72 M235.5 274.5 V273.53 M244.5 274.5 V275.89 M248.5 274.5 V277 M253.5 274.5 V280.47 M258.5 274.5 V283.94 M262.5 274.5 V286.03 M266.5 274.5 V284.64 M271.5 274.5 V285.06 M275.5 274.5 V285.33 M280.5 274.5 V285.61 M284.5 274.5 V285.33 M289.5 274.5 V285.33 M294.5 274.5 V285.06 M298.5 274.5 V283.25 M303.5 274.5 V282.28 M307.5 274.5 V280.47 M311.5 274.5 V277.69 M310.5 274.5 V277 M368.5 274.5 V277.69 M374.5 274.5 V279.78 M378.5 274.5 V281.17 M383.5 274.5 V283.25 M387.5 274.5 V283.25 M392.5 274.5 V283.94 M396.5 274.5 V283.25 M401.5 274.5 V281.86 M405.5 274.5 V281.17 M410.5 274.5 V281.86 M414.5 274.5 V282.28 M419.5 274.5 V283.67 M423.5 274.5 V281.86 M427.5 274.5 V281.17 M432.5 274.5 V279.08 M436.5 274.5 V275.61 M450.5 274.5 V271.44 M454.5 274.5 V270.06 M458.5 274.5 V269.36 M463.5 274.5 V268.67 M468.5 274.5 V268.67 M462.5 274.5 V269.36 M467.5 274.5 V270.06 M472.5 274.5 V269.36 M476.5 274.5 V267.28 M480.5 274.5 V265.89 M486.5 274.5 V265.89 M490.5 274.5 V265.19 M494.5 274.5 V264.5 M498.5 274.5 V264.22 M503.5 274.5 V263.11 M508.5 274.5 V264.22 M512.5 274.5 V265.19 M516.5 274.5 V270.06 M521.5 274.5 V271.44 M548.5 274.5 V275.89 M553.5 274.5 V276.31 M557.5 274.5 V276.31 M562.5 274.5 V276.31 M589.5 274.5 V276.72 M594.5 274.5 V277 M598.5 274.5 V277 M607.5 274.5 V276.31 M615.5 274.5 V270.75 M615.5 274.5 V270.75 M620.5 274.5 V271.17 M625.5 274.5 V272.14 M643.5 274.5 V276.31 M651.5 274.5 V277 M656.5 274.5 V277 M661.5 274.5 V277.69 M665.5 274.5 V278.11 M669.5 274.5 V278.67 M674.5 274.5 V279.08 M679.5 274.5 V277.69 M696.5 274.5 V272.14 M715.5 274.5 V278.39 M719.5 274.5 V279.08 M723.5 274.5 V281.17 M728.5 274.5 V281.86 M732.5 274.5 V281.86 M737.5 274.5 V280.89 M741.5 274.5 V280.47 M745.5 274.5 V280.47 M750.5 274.5 V279.08 M754.5 274.5 V279.08 M759.5 274.5 V278.39 M763.5 274.5 V279.08 M767.5 274.5 V279.08 M772.5 274.5 V279.78 M776.5 274.5 V279.08 M780.5 274.5 V277.69 M784.5 274.5 V277" stroke="#cc2424" stroke-width="1.5" fill="none"/>
<path d="M45.42 267.19 L65.56 278.31 L85 289.42 L107.22 281.78 L115.56 276.22 L125.28 272.06 L143.33 271.36 L155.83 265.81 L162.78 262.61 L160 265.19 L164.17 262.42 L175.28 262.42 L178.06 264.5 L187.78 265.19 L198.89 264.5 L204.44 265.19 L218.33 265.19 L222.5 262.42 L230.83 257.28 L235 258.25 L240.56 262.42 L246.11 265.19 L251.67 268.67 L257.22 274.22 L262.78 280.47 L271.11 285.33 L278.06 289.5 L287.78 295.06 L293.33 296.44 L303.06 300.61 L307.22 300.61 L310 298.53 L315.56 293.67 L321.11 290.19 L326.67 287.42 L337.78 285.06 L351.67 285.06 L357.22 286.72 L365.56 287.42 L372.5 292.28 L379.44 297.83 L386.39 302.69 L393.33 306.17 L401.67 308.25 L410 311.72 L418.33 315.89 L428.06 318.94 L432.22 317.28 L437.78 313.11 L446.11 309.64 L454.44 304.08 L460 301.31 L465.56 298.53 L471.11 297.14 L478.06 292.28 L485 288.81 L490.56 281.86 L496.11 277.69 L501.67 273.53 L507.22 270.06 L511.39 267.97 L515.56 268.67 L521.11 271.44 L529.44 270.06 L536.39 270.06 L543.33 272.14 L550.28 274.22 L557.22 275.61 L564.17 277 L571.11 276.72 L578.06 278.67 L585 281.17 L591.94 282.56 L605.83 282.56 L610 279.08 L615.56 274.22 L621.11 271.17 L625.28 271.17 L630.83 272.83 L637.78 274.92 L643.33 277 L651.67 278.11 L658.61 279.08 L665.56 279.78 L671.11 282.28 L678.06 282.56 L683.61 279.78 L690.56 278.39 L696.11 275.61 L701.67 275.33 L707.22 277.69 L714.17 281.17 L721.11 285.33 L728.06 288.39 L735 292.28 L743.33 295.06 L750 295.75 L759.72 296.44 L765.28 299.22 L770.83 301.31 L780.56 301.31 L790.28 300.33 L797.22 297.14 L805.56 297.14 L812.5 295.06 L819.44 292.97 L825 292.97 L830.56 292 L836.11 292.28 L841.67 293.67 L847.22 294.78 L852.78 296.17 L856.94 297.56 L861.11 297.14" stroke="#10107c" stroke-width="1.1" fill="none" stroke-linejoin="round"/>
<g fill="#e62020"><circle cx="46.81" cy="264.42" r="1.6"/><circle cx="51.67" cy="265.81" r="1.6"/><circle cx="56.53" cy="267.19" r="1.6"/><circle cx="62.08" cy="269.28" r="1.6"/><circle cx="66.25" cy="271.36" r="1.6"/><circle cx="71.11" cy="273.44" r="1.6"/><circle cx="75.28" cy="275.53" r="1.6"/><circle cx="80.14" cy="276.92" r="1.6"/><circle cx="85" cy="279.69" r="1.6"/><circle cx="89.17" cy="281.08" r="1.6"/><circle cx="93.33" cy="282.47" r="1.6"/><circle cx="97.78" cy="282.89" r="1.6"/><circle cx="102.36" cy="282.47" r="1.6"/><circle cx="107.22" cy="282.89" r="1.6"/><circle cx="111.39" cy="282.47" r="1.6"/><circle cx="115.56" cy="281.5" r="1.6"/><circle cx="120.42" cy="279.28" r="1.6"/><circle cx="124.58" cy="277.61" r="1.6"/><circle cx="128.75" cy="276.22" r="1.6"/><circle cx="132.92" cy="275.11" r="1.6"/><circle cx="137.78" cy="274.56" r="1.6"/><circle cx="141.94" cy="273.44" r="1.6"/><circle cx="146.81" cy="272.33" r="1.6"/><circle cx="150.97" cy="271.78" r="1.6"/><circle cx="155.83" cy="270.67" r="1.6"/><circle cx="160" cy="268.67" r="1.6"/><circle cx="164.86" cy="267" r="1.6"/><circle cx="169.03" cy="266.31" r="1.6"/><circle cx="173.89" cy="265.19" r="1.6"/><circle cx="178.06" cy="264.5" r="1.6"/><circle cx="182.92" cy="264.5" r="1.6"/><circle cx="187.08" cy="264.5" r="1.6"/><circle cx="191.25" cy="264.5" r="1.6"/><circle cx="196.11" cy="264.5" r="1.6"/><circle cx="200.28" cy="263.11" r="1.6"/><circle cx="204.44" cy="264.78" r="1.6"/><circle cx="208.61" cy="264.78" r="1.6"/><circle cx="214.17" cy="264.78" r="1.6"/><circle cx="217.64" cy="264.78" r="1.6"/><circle cx="222.5" cy="263.39" r="1.6"/><circle cx="226.67" cy="262.42" r="1.6"/><circle cx="231.53" cy="261.44" r="1.6"/><circle cx="235.69" cy="260.61" r="1.6"/><circle cx="240.56" cy="261.44" r="1.6"/><circle cx="244.72" cy="261.44" r="1.6"/><circle cx="249.58" cy="262" r="1.6"/><circle cx="253.75" cy="263.11" r="1.6"/><circle cx="258.61" cy="265.89" r="1.6"/><circle cx="262.78" cy="268.39" r="1.6"/><circle cx="266.94" cy="271.17" r="1.6"/><circle cx="271.81" cy="274.22" r="1.6"/><circle cx="275.97" cy="276.72" r="1.6"/><circle cx="280.83" cy="279.08" r="1.6"/><circle cx="285" cy="281.86" r="1.6"/><circle cx="289.86" cy="284.22" r="1.6"/><circle cx="294.03" cy="286.44" r="1.6"/><circle cx="298.89" cy="289.22" r="1.6"/><circle cx="303.06" cy="291.17" r="1.6"/><circle cx="307.92" cy="292.56" r="1.6"/><circle cx="312.08" cy="293.39" r="1.6"/><circle cx="316.67" cy="293.39" r="1.6"/><circle cx="321.11" cy="292.56" r="1.6"/><circle cx="325.56" cy="291.58" r="1.6"/><circle cx="330.14" cy="290.61" r="1.6"/><circle cx="335" cy="289.5" r="1.6"/><circle cx="339.17" cy="288.39" r="1.6"/><circle cx="343.33" cy="287.83" r="1.6"/><circle cx="347.78" cy="287.42" r="1.6"/><circle cx="352.36" cy="286.03" r="1.6"/><circle cx="356.94" cy="286.44" r="1.6"/><circle cx="361.11" cy="286.03" r="1.6"/><circle cx="365.56" cy="286.03" r="1.6"/><circle cx="370" cy="287.42" r="1.6"/><circle cx="374.86" cy="288.81" r="1.6"/><circle cx="379.03" cy="290.61" r="1.6"/><circle cx="383.61" cy="292.56" r="1.6"/><circle cx="388.06" cy="294.36" r="1.6"/><circle cx="392.92" cy="296.44" r="1.6"/><circle cx="397.08" cy="298.53" r="1.6"/><circle cx="401.67" cy="300.61" r="1.6"/><circle cx="406.11" cy="302.28" r="1.6"/><circle cx="410.97" cy="303.67" r="1.6"/><circle cx="415.14" cy="305.47" r="1.6"/><circle cx="419.44" cy="307.28" r="1.6"/><circle cx="423.89" cy="309.22" r="1.6"/><circle cx="428.06" cy="311.44" r="1.6"/><circle cx="432.92" cy="312.42" r="1.6"/><circle cx="437.08" cy="312.42" r="1.6"/><circle cx="441.94" cy="312.42" r="1.6"/><circle cx="446.11" cy="311.44" r="1.6"/><circle cx="450.97" cy="310.33" r="1.6"/><circle cx="454.86" cy="308.67" r="1.6"/><circle cx="460" cy="307.56" r="1.6"/><circle cx="464.17" cy="305.47" r="1.6"/><circle cx="468.61" cy="303.67" r="1.6"/><circle cx="473.19" cy="302.28" r="1.6"/><circle cx="477.78" cy="300.33" r="1.6"/><circle cx="482.22" cy="297.56" r="1.6"/><circle cx="486.81" cy="295.75" r="1.6"/><circle cx="491.25" cy="292.56" r="1.6"/><circle cx="495.42" cy="289.5" r="1.6"/><circle cx="500.28" cy="286.44" r="1.6"/><circle cx="504.44" cy="283.67" r="1.6"/><circle cx="509.03" cy="280.89" r="1.6"/><circle cx="513.19" cy="278.39" r="1.6"/><circle cx="517.64" cy="276.72" r="1.6"/><circle cx="522.22" cy="275.33" r="1.6"/><circle cx="526.67" cy="274.22" r="1.6"/><circle cx="531.25" cy="273.53" r="1.6"/><circle cx="535.69" cy="272.83" r="1.6"/><circle cx="540.28" cy="272.83" r="1.6"/><circle cx="544.72" cy="271.72" r="1.6"/><circle cx="548.89" cy="272.83" r="1.6"/><circle cx="553.75" cy="272.83" r="1.6"/><circle cx="557.92" cy="272.83" r="1.6"/><circle cx="562.78" cy="273.53" r="1.6"/><circle cx="566.94" cy="273.53" r="1.6"/><circle cx="571.11" cy="274.22" r="1.6"/><circle cx="575.97" cy="274.92" r="1.6"/><circle cx="580.14" cy="275.61" r="1.6"/><circle cx="585" cy="276.72" r="1.6"/><circle cx="589.17" cy="277.42" r="1.6"/><circle cx="593.75" cy="278.11" r="1.6"/><circle cx="598.19" cy="278.39" r="1.6"/><circle cx="602.78" cy="279.08" r="1.6"/><circle cx="607.22" cy="279.5" r="1.6"/><circle cx="612.08" cy="279.08" r="1.6"/><circle cx="616.25" cy="278.39" r="1.6"/><circle cx="621.11" cy="276.31" r="1.6"/><circle cx="625.28" cy="274.92" r="1.6"/><circle cx="629.44" cy="274.22" r="1.6"/><circle cx="634.31" cy="274.22" r="1.6"/><circle cx="638.47" cy="273.94" r="1.6"/><circle cx="643.33" cy="274.22" r="1.6"/><circle cx="647.5" cy="274.5" r="1.6"/><circle cx="651.67" cy="274.92" r="1.6"/><circle cx="656.53" cy="275.33" r="1.6"/><circle cx="661.11" cy="275.89" r="1.6"/><circle cx="665.56" cy="276.31" r="1.6"/><circle cx="669.72" cy="277" r="1.6"/><circle cx="674.58" cy="277.69" r="1.6"/><circle cx="679.17" cy="278.11" r="1.6"/><circle cx="683.61" cy="278.39" r="1.6"/><circle cx="687.78" cy="278.67" r="1.6"/><circle cx="692.64" cy="278.39" r="1.6"/><circle cx="697.22" cy="277.69" r="1.6"/><circle cx="701.67" cy="277.28" r="1.6"/><circle cx="705.83" cy="277" r="1.6"/><circle cx="710" cy="277" r="1.6"/><circle cx="714.86" cy="277.28" r="1.6"/><circle cx="719.03" cy="278.39" r="1.6"/><circle cx="723.89" cy="280.47" r="1.6"/><circle cx="728.06" cy="281.44" r="1.6"/><circle cx="732.22" cy="283.67" r="1.6"/><circle cx="737.08" cy="285.33" r="1.6"/><circle cx="741.25" cy="286.44" r="1.6"/><circle cx="746.11" cy="288.39" r="1.6"/><circle cx="750" cy="289.5" r="1.6"/><circle cx="754.86" cy="290.61" r="1.6"/><circle cx="759.03" cy="291.58" r="1.6"/><circle cx="763.89" cy="292.56" r="1.6"/><circle cx="768.06" cy="293.39" r="1.6"/><circle cx="772.92" cy="295.33" r="1.6"/><circle cx="777.08" cy="296.44" r="1.6"/><circle cx="781.94" cy="297.14" r="1.6"/><circle cx="786.11" cy="297.14" r="1.6"/><circle cx="790.97" cy="297.14" r="1.6"/><circle cx="795.14" cy="297.14" r="1.6"/><circle cx="799.72" cy="297.56" r="1.6"/><circle cx="804.17" cy="297.56" r="1.6"/><circle cx="808.33" cy="296.44" r="1.6"/><circle cx="813.19" cy="296.44" r="1.6"/><circle cx="817.36" cy="295.75" r="1.6"/><circle cx="821.94" cy="295.33" r="1.6"/><circle cx="826.11" cy="294.78" r="1.6"/><circle cx="830.56" cy="294.36" r="1.6"/><circle cx="835" cy="293.39" r="1.6"/><circle cx="839.58" cy="293.39" r="1.6"/><circle cx="843.75" cy="293.39" r="1.6"/><circle cx="848.61" cy="293.39" r="1.6"/><circle cx="852.78" cy="293.94" r="1.6"/><circle cx="857.64" cy="294.36" r="1.6"/><circle cx="861.81" cy="294.36" r="1.6"/></g>
</g>
<circle cx="13.8" cy="263.6" r="1.5" fill="#e62020"/>
<text x="15.5" y="266" font-size="11" fill="#12127e" id="macdt" textLength="28.3" lengthAdjust="spacingAndGlyphs">MACD</text>
<g clip-path="url(#crsi)">
<rect x="14" y="330" width="847" height="1.7" fill="#1a1ab0"/>
<rect x="14" y="379.8" width="847" height="1.7" fill="#1a1ab0"/>
<path d="M13.47 347 L16.94 345.61 L21.11 347.69 L25.28 344.92 L29.44 344.22 L32.92 339.36 L35.69 337.97 L38.47 340.06 L40.56 348.39 L43.33 362.28 L46.81 360.19 L49.58 363.67 L52.36 367.83 L55.83 366.17 L60 369.92 L64.17 374.08 L68.33 376.86 L72.5 378.25 L76.67 378.94 L79.44 376.86 L82.92 379.22 L85 376.17 L87.78 367.83 L90.56 363.67 L93.33 361.58 L97.5 361.58 L101.67 356.03 L105.83 353.67 L110 355.33 L114.17 342.14 L118.33 340.06 L122.5 340.75 L125.28 345.61 L128.75 353.94 L132.22 347 L136.39 349.78 L141.25 357.83 L145.42 348.39 L150.28 341.44 L155.14 342.83 L159.31 337 L164.17 337 L160 337.28 L164.86 337.28 L168.33 343.53 L172.5 349.08 L177.36 350.89 L182.22 348.39 L186.39 345.61 L190.56 349.5 L195.42 342.56 L200.28 349.08 L204.44 353.67 L208.61 346.72 L213.47 347.69 L217.64 342.83 L222.5 335.19 L226.67 331.44 L230.83 330.61 L232.22 332.42 L234.31 348.39 L236.39 354.64 L240.56 356.44 L244.72 356.72 L248.89 359.5 L254.44 368.53 L258.61 373.39 L262.78 378.67 L266.67 369.92 L271.11 371.31 L273.19 373.67 L278.06 375.47 L285 376.86 L293.33 377.56 L301.67 376.86 L307.22 374.08 L310 362.28 L312.78 358.39 L316.94 356.44 L312.78 357.83 L316.94 356.03 L321.11 356.72 L325.28 356.03 L329.44 359.78 L334.31 363.39 L338.47 359.22 L342.64 363.39 L346.81 364.36 L350.28 364.36 L355.83 368.53 L360 371.31 L365.56 366.44" stroke="#ff9226" stroke-width="1.1" fill="none" stroke-linejoin="round"/>
<path d="M365.56 366.44 L368.33 378.94 L369.72 380.61 L371.81 382.42 L376.67 382.83 L383.61 388.67 L387.78 384.5 L392.64 388.39 L396.81 384.5 L400.97 383.11 L405.83 387 L411.39 390.75 L416.94 392.83 L422.5 394.5 L427.36 394.5 L432.22 388.39" stroke="#22d822" stroke-width="1.1" fill="none" stroke-linejoin="round"/>
<path d="M432.22 388.39 L434.31 380.33 L435.69 372.69 L437.08 370.89 L440.56 373.11 L445.42 373.11 L450.97 366.72 L455.14 370.33 L459.31 372.28 L463.47 366.44 L467.64 369.22 L460 371.31 L463.47 366.44 L468.33 369.92 L472.5 363.67 L477.36 354.64 L481.53 357 L485.69 354.64 L489.86 344.22 L494.03 347.69 L498.89 342.14 L503.06 339.36 L507.92 341.44 L512.08 348.39 L516.94 358.39 L521.81 356.72 L526.67 351.86 L530.14 350.47 L535 352.83 L539.17 356.03 L544.03 358.81 L548.89 362.56 L553.06 362.56 L557.22 360.19 L562.08 362.56 L566.25 356.03 L570.42 360.19 L574.58 362.28 L579.44 371.31 L584.31 367.14 L591.94 366.72 L597.5 368.94 L602.36 361.58 L606.53 366.44 L609.31 348.39 L610 347 L612.08 339.78 L614.86 338.39 L616.94 340.75 L620.42 347.69 L624.58 353.25 L629.44 358.39 L633.61 358.81 L638.47 361.58 L642.64 362.97 L646.81 359.5 L650.97 358.39 L655.14 365.33 L660 362.56 L663.47 363.67 L669.72 369.92 L673.89 365.33 L678.06 362.97 L682.22 355.33 L687.08 349.5 L691.94 352.56 L696.11 351.17 L700.97 356.03 L705.14 363.67 L709.31 367.14 L714.17 374.08 L719.03 377.56 L723.19 379.22 L726.67 377.56" stroke="#ff9226" stroke-width="1.1" fill="none" stroke-linejoin="round"/>
<path d="M726.67 377.56 L730.14 380.61" stroke="#22d822" stroke-width="1.1" fill="none" stroke-linejoin="round"/>
<path d="M730.14 380.61 L732.92 380.33 L737.08 378.25 L740.56 380.33" stroke="#ff9226" stroke-width="1.1" fill="none" stroke-linejoin="round"/>
<path d="M740.56 380.33 L743.33 382.42" stroke="#22d822" stroke-width="1.1" fill="none" stroke-linejoin="round"/>
<path d="M743.33 382.42 L746.81 383.11 L751.67 380.33 L754.44 379.22" stroke="#ff9226" stroke-width="1.1" fill="none" stroke-linejoin="round"/>
<path d="M754.44 379.22 L757.22 381.03 L761.39 383.81 L764.17 385.89 L766.94 390.75 L767.36 391.17 L771.53 390.75" stroke="#22d822" stroke-width="1.1" fill="none" stroke-linejoin="round"/>
<path d="M771.53 390.75 L772.92 390.06 L776.39 381.03 L781.94 380.61 L785.42 376.44 L790.28 378.25 L794.44 367.56 L800 372.69 L805.56 372.28 L811.81 375.47 L816.67 368.11 L820.83 370.61 L825.69 374.5 L831.25 369.92 L834.72 372.28 L838.89 377.56 L842.36 380.06" stroke="#ff9226" stroke-width="1.1" fill="none" stroke-linejoin="round"/>
<path d="M842.36 380.06 L845.83 383.11 L850 384.78 L853.47 384.22" stroke="#22d822" stroke-width="1.1" fill="none" stroke-linejoin="round"/>
<path d="M853.47 384.22 L856.94 382" stroke="#ff9226" stroke-width="1.1" fill="none" stroke-linejoin="round"/>
<path d="M856.94 382 L861.11 384.78" stroke="#22d822" stroke-width="1.1" fill="none" stroke-linejoin="round"/>
<rect x="230" y="330" width="3" height="1.2" fill="#e030e0"/>
</g>
<rect x="14" y="329.6" width="16.6" height="11.4" fill="#3b4149"/>
<text x="15.8" y="339.1" font-size="11.2" fill="#ff9a3a" id="rsit" textLength="14.2" lengthAdjust="spacingAndGlyphs">RSI</text>
<rect x="13.5" y="37.5" width="876" height="211" fill="none" stroke="#9fb3c5" stroke-width="1"/>
<rect x="13.5" y="254.5" width="876" height="67" fill="none" stroke="#9fb3c5" stroke-width="1"/>
<rect x="13.5" y="327.5" width="876" height="70" fill="none" stroke="#9fb3c5" stroke-width="1"/>
<rect x="13" y="37" width="31" height="22" fill="#f1f1f1"/><rect x="13" y="37" width="31" height="4.5" fill="#d9d9d9"/>
<rect x="17.5" y="45.5" width="9" height="9" rx="1.5" fill="url(#redsq)" stroke="#a01820" stroke-width="1"/>
<rect x="30.5" y="45.5" width="9" height="9" rx="1.5" fill="url(#bluesq)" stroke="#0e5ea8" stroke-width="1"/>
<g stroke="#dfe6ec" stroke-width="1">
<path d="M890 65.5 H892.5"/>
<path d="M890 97.5 H892.5"/>
<path d="M890 129.5 H892.5"/>
<path d="M890 161.5 H892.5"/>
<path d="M890 192.5 H892.5"/>
<path d="M890 274.5 H892.5"/>
<path d="M890 312.5 H892.5"/>
<path d="M890 355.5 H892.5"/>
</g>
<g font-size="11" fill="#fff" stroke="#fff" stroke-width="0.25">
<text x="896.5" y="71.7" textLength="32.4" lengthAdjust="spacingAndGlyphs">1.2200</text>
<text x="896.5" y="103.7" textLength="32.4" lengthAdjust="spacingAndGlyphs">1.2100</text>
<text x="896.5" y="135.7" textLength="32.4" lengthAdjust="spacingAndGlyphs">1.2000</text>
<text x="896.5" y="167.7" textLength="32.4" lengthAdjust="spacingAndGlyphs">1.1900</text>
<text x="896.5" y="198.7" textLength="32.4" lengthAdjust="spacingAndGlyphs">1.1800</text>
<text x="898" y="280.8" textLength="33.4" lengthAdjust="spacingAndGlyphs">+0.000</text>
<text x="897.6" y="318.8" textLength="29.8" lengthAdjust="spacingAndGlyphs">-0.005</text>
<text x="897.5" y="362" textLength="11.3" lengthAdjust="spacingAndGlyphs">50</text>
</g>
<rect x="889" y="213" width="48" height="21" fill="#fff"/>
<text x="897.9" y="227" font-size="11" fill="#3a3a4a" stroke="#3a3a4a" stroke-width="0.2" textLength="32.2" lengthAdjust="spacingAndGlyphs">1.1704</text>
<g clip-path="url(#cdark)">
<g stroke="#dfe6ec" stroke-width="1">
<path d="M25.5 397.5 V401"/>
<path d="M52.5 397.5 V401"/>
<path d="M79.5 397.5 V401"/>
<path d="M106.5 397.5 V401"/>
<path d="M132.5 397.5 V401"/>
<path d="M159.5 397.5 V401"/>
<path d="M186.5 397.5 V401"/>
<path d="M213.5 397.5 V401"/>
<path d="M240.5 397.5 V401"/>
<path d="M266.5 397.5 V401"/>
<path d="M293.5 397.5 V401"/>
<path d="M320.5 397.5 V401"/>
<path d="M347.5 397.5 V401"/>
<path d="M374.5 397.5 V401"/>
<path d="M401.5 397.5 V401"/>
<path d="M427.5 397.5 V401"/>
<path d="M454.5 397.5 V401"/>
<path d="M481.5 397.5 V401"/>
<path d="M508.5 397.5 V401"/>
<path d="M535.5 397.5 V401"/>
<path d="M562.5 397.5 V401"/>
<path d="M588.5 397.5 V401"/>
<path d="M615.5 397.5 V401"/>
<path d="M642.5 397.5 V401"/>
<path d="M669.5 397.5 V401"/>
<path d="M696.5 397.5 V401"/>
<path d="M723.5 397.5 V401"/>
<path d="M749.5 397.5 V401"/>
<path d="M776.5 397.5 V401"/>
<path d="M803.5 397.5 V401"/>
<path d="M830.5 397.5 V401"/>
<path d="M857.5 397.5 V401"/>
</g>
<g font-size="11.2" fill="#fff" text-anchor="middle" stroke="#fff" stroke-width="0.25">
<text x="24.7" y="420" textLength="11" lengthAdjust="spacingAndGlyphs">16</text>
<text x="51.7" y="420" textLength="11" lengthAdjust="spacingAndGlyphs">17</text>
<text x="78.7" y="420" textLength="11" lengthAdjust="spacingAndGlyphs">18</text>
<text x="105.7" y="420" textLength="11" lengthAdjust="spacingAndGlyphs">19</text>
<text x="131.7" y="420" textLength="11" lengthAdjust="spacingAndGlyphs">22</text>
<text x="158.7" y="420" textLength="11" lengthAdjust="spacingAndGlyphs">23</text>
<text x="185.7" y="420" textLength="11" lengthAdjust="spacingAndGlyphs">24</text>
<text x="212.7" y="420" textLength="11" lengthAdjust="spacingAndGlyphs">25</text>
<text x="239.7" y="420" textLength="11" lengthAdjust="spacingAndGlyphs">26</text>
<text x="265.7" y="420" textLength="5.5" lengthAdjust="spacingAndGlyphs">1</text>
<text x="292.7" y="420" textLength="5.5" lengthAdjust="spacingAndGlyphs">2</text>
<text x="319.7" y="420" textLength="5.5" lengthAdjust="spacingAndGlyphs">3</text>
<text x="346.7" y="420" textLength="5.5" lengthAdjust="spacingAndGlyphs">4</text>
<text x="373.7" y="420" textLength="5.5" lengthAdjust="spacingAndGlyphs">5</text>
<text x="400.7" y="420" textLength="5.5" lengthAdjust="spacingAndGlyphs">8</text>
<text x="426.7" y="420" textLength="5.5" lengthAdjust="spacingAndGlyphs">9</text>
<text x="453.7" y="420" textLength="11" lengthAdjust="spacingAndGlyphs">10</text>
<text x="480.7" y="420" textLength="11" lengthAdjust="spacingAndGlyphs">11</text>
<text x="507.7" y="420" textLength="11" lengthAdjust="spacingAndGlyphs">12</text>
<text x="534.7" y="420" textLength="11" lengthAdjust="spacingAndGlyphs">15</text>
<text x="561.7" y="420" textLength="11" lengthAdjust="spacingAndGlyphs">16</text>
<text x="587.7" y="420" textLength="11" lengthAdjust="spacingAndGlyphs">17</text>
<text x="614.7" y="420" textLength="11" lengthAdjust="spacingAndGlyphs">18</text>
<text x="641.7" y="420" textLength="11" lengthAdjust="spacingAndGlyphs">19</text>
<text x="668.7" y="420" textLength="11" lengthAdjust="spacingAndGlyphs">22</text>
<text x="695.7" y="420" textLength="11" lengthAdjust="spacingAndGlyphs">23</text>
<text x="722.7" y="420" textLength="11" lengthAdjust="spacingAndGlyphs">24</text>
<text x="748.7" y="420" textLength="11" lengthAdjust="spacingAndGlyphs">25</text>
<text x="775.7" y="420" textLength="11" lengthAdjust="spacingAndGlyphs">26</text>
<text x="802.7" y="420" textLength="11" lengthAdjust="spacingAndGlyphs">29</text>
<text x="829.7" y="420" textLength="11" lengthAdjust="spacingAndGlyphs">30</text>
<text x="856.7" y="420" textLength="11" lengthAdjust="spacingAndGlyphs">31</text>
<text x="882.7" y="420" textLength="5.5" lengthAdjust="spacingAndGlyphs">1</text>
</g>
<path d="M13.8 374.5 H72.8 Q75.8 374.5 75.8 377.5 V390.5 Q75.8 393.5 72.8 393.5 H13.8 Z" fill="url(#mlab)" stroke="#a9bece" stroke-width="1"/>
<rect x="13" y="374" width="1.6" height="27" fill="#d9efe6"/>
<text x="22.1" y="387.7" font-size="10.6" fill="#fff">Фев 2021</text>
<path d="M266.8 374.5 H326.8 Q329.8 374.5 329.8 377.5 V390.5 Q329.8 393.5 326.8 393.5 H266.8 Z" fill="url(#mlab)" stroke="#a9bece" stroke-width="1"/>
<rect x="266" y="374" width="1.6" height="27" fill="#d9efe6"/>
<text x="275.1" y="387.7" font-size="10.6" fill="#fff">Мар 2021</text>
<rect x="884" y="374.5" width="70" height="19" fill="url(#mlab)" stroke="#a9bece" stroke-width="1"/>
<rect x="883.2" y="374" width="1.6" height="27" fill="#d9efe6"/>
<text x="891.3" y="387.7" font-size="10.6" fill="#fff">Апр 2021</text>
</g>
</svg></body></html>
